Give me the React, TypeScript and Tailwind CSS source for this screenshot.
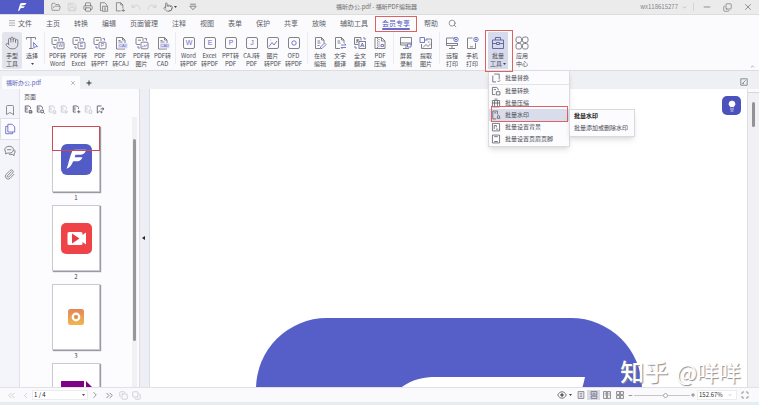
import { useState, type ReactNode } from "react";
import {
  Bookmark,
  ChevronDown,
  ChevronLeft,
  ChevronRight,
  ChevronsLeft,
  ChevronsRight,
  Copy,
  FolderOpen,
  Hand,
  Lightbulb,
  Maximize,
  Menu,
  Minus,
  Paperclip,
  Pointer,
  Printer,
  Redo,
  Save,
  Search,
  Undo,
  X,
} from "lucide-react";

interface Tool {
  lines: [string, string];
  icon: ReactNode;
  active?: boolean;
  caret?: boolean;
}

function Glyph({ children }: { children: ReactNode }) {
  return (
    <svg
      viewBox="0 0 14 14"
      className="size-3.5 shrink-0 text-[#74757c]"
      fill="none"
      stroke="currentColor"
      strokeWidth="0.9"
      aria-hidden="true"
    >
      {children}
    </svg>
  );
}

function Letter({ x, y, size, children }: { x: number; y: number; size: number; children: string }) {
  return (
    <text
      x={x}
      y={y}
      fontSize={size}
      textAnchor="middle"
      fill="#6a6dc0"
      stroke="none"
      fontFamily="Liberation Sans, sans-serif"
    >
      {children}
    </text>
  );
}

// PDF page turning into another format
function ExportGlyph({ letter }: { letter: string }) {
  return (
    <Glyph>
      <path d="M5 8.5H2a1 1 0 0 1-1-1v-5a1 1 0 0 1 1-1h5a1 1 0 0 1 1 1V5" />
      <path d="M3 4.2h3" />
      <path d="M9.5 2.6h2v2M3 10v2h2" stroke="#6a6dc0" />
      <rect x="6" y="6.2" width="7" height="6.6" rx="1" />
      {letter === "img" ? (
        <path d="m7 11.5 2-2 1.2 1 1.8-2" stroke="#6a6dc0" />
      ) : (
        <Letter x={9.5} y={11.4} size={5}>{letter}</Letter>
      )}
    </Glyph>
  );
}

function StampGlyph({ label }: { label: string }) {
  return (
    <Glyph>
      <path d="M11 13H2.5V1.500h6L11 4v3M8.500 1.500V4H11M4.500 4.500h2M4.500 6h4" />
      <rect x="4" y="7.300" width="9.500" height="5" fill="#dcdbf6" stroke="none" />
      <Letter x={8.8} y={11.4} size={4}>{label}</Letter>
    </Glyph>
  );
}

function ImportGlyph({ letter }: { letter: string }) {
  return (
    <Glyph>
      <rect x="1.5" y="1.5" width="11" height="11" rx="1.5" />
      {letter === "img" && (
        <path d="m3 10.5 3-4 2 2.5L11 5M4.5 4h.6" stroke="#6a6dc0" />
      )}
      {letter === "ofd" && <circle cx="7" cy="7" r="2.2" stroke="#6a6dc0" />}
      {letter.length === 1 && <Letter x={7} y={9.3} size={7}>{letter}</Letter>}
    </Glyph>
  );
}

function PageGlyph({ mark }: { mark: ReactNode }) {
  return (
    <Glyph>
      <path d="M7 12.5H2.5v-11h6L11 4v3M8.5 1.5V4H11M4.5 5h2.5M4.5 7h3" />
      <g stroke="#6a6dc0">{mark}</g>
    </Glyph>
  );
}

const screenPath = "M10 2H1.5v7.5h11V7M7 9.5v3M4 12.5h6M1.5 7.5h11";

const toolGroups: { id: string; className: string; tools: Tool[] }[] = [
  {
    id: "convert-to",
    className: "w-[21px]",
    tools: [
      { lines: ["PDF转", "Word"], icon: <ExportGlyph letter="W" /> },
      { lines: ["PDF转", "Excel"], icon: <ExportGlyph letter="E" /> },
      { lines: ["PDF", "转PPT"], icon: <ExportGlyph letter="P" /> },
      { lines: ["PDF", "转CAJ"], icon: <StampGlyph label="CAJ" /> },
      { lines: ["PDF转", "图片"], icon: <ExportGlyph letter="img" /> },
      { lines: ["PDF转", "CAD"], icon: <StampGlyph label="CAD" /> },
    ],
  },
  {
    id: "convert-from",
    className: "w-[21px]",
    tools: [
      { lines: ["Word", "转PDF"], icon: <ImportGlyph letter="W" /> },
      { lines: ["Excel", "转PDF"], icon: <ImportGlyph letter="E" /> },
      { lines: ["PPT转", "PDF"], icon: <ImportGlyph letter="P" /> },
      { lines: ["CAJ转", "PDF"], icon: <ImportGlyph letter="J" /> },
      { lines: ["图片", "转PDF"], icon: <ImportGlyph letter="img" /> },
      { lines: ["OFD", "转PDF"], icon: <ImportGlyph letter="ofd" /> },
    ],
  },
  {
    id: "online",
    className: "w-5",
    tools: [
      { lines: ["在线", "编辑"], icon: <PageGlyph mark={<path d="m7.5 11 4-4 1.5 1.5-4 4h-1.500zM4.500 9.500h2" />} /> },
      { lines: ["文字", "翻译"], icon: <PageGlyph mark={<path d="M8 9h5l-1.500-1.500M13 11.500H8L9.500 13" />} /> },
      {
        lines: ["全文", "翻译"],
        icon: (
          <Glyph>
            <path d="M5.500 8.500H1.500v-7h6.500v3M3 4h3.500M4.700 3v1c0 1.500-.8 2.500-1.900 3M3.600 4.500c.4 1 .9 1.600 1.900 2" />
            <rect x="6" y="5.500" width="6.500" height="7" />
            <path d="m7.600 11 1.700-4 1.700 4M8.200 9.800h2.200M10 2h2v2M2 10v2h2" stroke="#6a6dc0" />
          </Glyph>
        ),
      },
      {
        lines: ["PDF", "压缩"],
        icon: (
          <Glyph>
            <path d="M2 1.500h6.500L12 5v7.500H2zM8.500 1.500V5H12" />
            <path d="M4.500 2v10M6 3v8" strokeDasharray="1.200 1" />
            <path d="M8 8.500h2.500v2H8z" stroke="#6a6dc0" />
          </Glyph>
        ),
      },
    ],
  },
  {
    id: "capture",
    className: "w-5",
    tools: [
      {
        lines: ["屏幕", "录制"],
        icon: (
          <Glyph>
            <path d="M1.500 1.500h11v7.500h-11zM7 9v3.500M4 12.500h6M1.500 7h11" />
            <path d="M8.500 8h3.500v3H8.500z" stroke="#6a6dc0" fill="#fbfbfd" />
          </Glyph>
        ),
      },
      {
        lines: ["提取", "图片"],
        icon: (
          <Glyph>
            <path d="M7 3h5.500v9.500H2.500V8M4 11.500l3-3 2 2 3-3" />
            <path d="M1 1.500h4.500v5H1zM5.500 4h3M9 6h1.500" stroke="#6a6dc0" />
          </Glyph>
        ),
      },
    ],
  },
  {
    id: "print",
    className: "w-5",
    tools: [
      {
        lines: ["远程", "打印"],
        icon: (
          <Glyph>
            <path d={screenPath} />
            <circle cx="11" cy="3.500" r="2.200" stroke="#6a6dc0" />
            <path d="M10 3.500h2M11 2.500v2" stroke="#6a6dc0" />
          </Glyph>
        ),
      },
      {
        lines: ["手机", "打印"],
        icon: (
          <Glyph>
            <path d="M7.500 2H2.500v10.500h8V7M5 10.800h3" />
            <circle cx="11" cy="3.500" r="2.200" stroke="#6a6dc0" />
            <path d="M10 3.500h2M11 2.500v2" stroke="#6a6dc0" />
          </Glyph>
        ),
      },
    ],
  },
  {
    id: "batch",
    className: "w-5",
    tools: [
      {
        lines: ["批量", "工具"],
        active: true,
        caret: true,
        icon: (
          <Glyph>
            <path d="M1.500 4h11v8.500h-11zM4.500 4V1.500h5V4M1.500 7.500h11" stroke="#5a5f9c" />
            <path d="M5.500 6.500h3v2h-3z" stroke="#5a5f9c" fill="#d7daea" />
          </Glyph>
        ),
      },
    ],
  },
];

const menus = [
  "主页", "转换", "编辑", "页面管理", "注释", "视图", "表单",
  "保护", "共享", "放映", "辅助工具", "会员专享", "帮助",
];

const batchItems = [
  { label: "批量替换", mark: <path d="M7 12.500H2.500v-9M4.500 1.500h7V9M9 11l1.500 1.500L13 10" /> },
  { label: "批量转换", mark: <path d="M6 12H2V2h6l2 2v2M4 5h3M7.500 8h5v4.500h-5z" /> },
  { label: "批量压缩", mark: <path d="M2 3.500h10v9H2zM2 7h10M5 1.500h4M5 3.500v9M9 3.500v9" /> },
  { label: "批量水印", mark: <path d="M7 12.500H2.500v-11H9V6M4.500 4h2.500M8 11.500h5M9 11c0-2 0-3.500 1.500-3.500S12 9 12 11" /> },
  { label: "批量设置背景", mark: <path d="M2 2h10v10.500H2zM4.500 10V5M4.500 5h3M7.500 5v2.500M7 10h3" /> },
  { label: "批量设置页眉页脚", mark: <path d="M2 1.500h10v11H2zM4.500 3.700h5M4.500 10.500h5" /> },
];

function Brand({ className }: { className: string }) {
  return (
    <svg viewBox="0 0 30 30" className={className} fill="currentColor" aria-hidden="true">
      <path d="M11 6.500C12 5.500 13 5 15 5h11c-1.500 4-3.500 5.500-7 5.500h-4.500l-1 2.500H22c-1.500 3.500-3.500 4.500-6.500 4.500h-3.500C10.500 21 9 24 5 25.500 7 20 8.500 12 11 6.500z" />
    </svg>
  );
}

function Caret() {
  return (
    <svg viewBox="0 0 3 2" className="h-0.5 w-[3px] shrink-0" fill="#44454c" aria-hidden="true">
      <path d="M0 0h3L1.500 2z" />
    </svg>
  );
}

function ToolButton({ tool, className }: { tool: Tool; className: string }) {
  return (
    <button
      type="button"
      className={`flex h-[37px] shrink-0 flex-col items-center pt-1 text-center text-[6px] leading-2 whitespace-nowrap ${className} ${tool.active ? "bg-[#d7daea]" : ""}`}
    >
      {tool.icon}
      <span className="mt-0.5 block">{tool.lines[0]}</span>
      <span className="flex min-h-2 items-center gap-px">
        {tool.lines[1]}
        {tool.caret && <Caret />}
      </span>
    </button>
  );
}

function TitleBar() {
  return (
    <header className="flex h-[15px] shrink-0 items-center border-b border-[#dddde0] bg-[#ebebeb] text-[#6c6c70]">
      <div className="flex h-full flex-1 items-center gap-1.5">
        <div className="mr-px flex h-full w-11 shrink-0 items-center justify-center bg-[#535bc6] text-white">
          <Brand className="size-3" />
        </div>
        <button type="button" aria-label="打开"><FolderOpen size={10} strokeWidth={1.5} /></button>
        <button type="button" aria-label="保存" className="text-[#c6c6c9]"><Save size={10} strokeWidth={1.5} /></button>
        <button type="button" aria-label="打印"><Printer size={10} strokeWidth={1.7} /></button>
        <button type="button" aria-label="导出">
          <svg viewBox="0 0 14 14" className="size-2.5" fill="none" stroke="currentColor">
            <path d="M4 12H2V1h6l3 3v2M5 6h7v7H5zM7 8.500h3M7 11h3" />
          </svg>
        </button>
        <button type="button" aria-label="新建">
          <svg viewBox="0 0 14 14" className="size-2.5" fill="none" stroke="currentColor">
            <path d="M8 12.500H2V1h6l3 3v5M8 1v3h3M11.500 9.500V14M9 11.800h5" />
          </svg>
        </button>
        <button type="button" aria-label="撤销" className="text-[#c6c6c9]"><Undo size={10} strokeWidth={1.5} /></button>
        <button type="button" aria-label="重做" className="text-[#c6c6c9]"><Redo size={10} strokeWidth={1.5} /></button>
        <button type="button" aria-label="触摸模式" className="flex items-center gap-px">
          <Pointer size={10} strokeWidth={1.7} />
          <Caret />
        </button>
        <button type="button" aria-label="自定义工具栏" className="ml-1.5">
          <svg viewBox="0 0 10 10" className="size-2" fill="none" stroke="currentColor">
            <path d="M1.500 1.500h7M1 4h8L5 8.500z" />
          </svg>
        </button>
      </div>
      <h1 className="text-[6px] leading-2">福昕办公.pdf - 福昕PDF编辑器</h1>
      <div className="flex flex-1 items-center justify-end pr-1.5">
        <button type="button" className="flex items-center gap-1 text-[6px] leading-2 text-[#85858a]">
          wx118615277
          <ChevronDown size={5} />
        </button>
        <span className="mr-2 ml-1.5 h-2 w-px bg-[#d5d5d8]" />
        <div className="flex items-center gap-[11px]">
          <button type="button" aria-label="最小化"><Minus size={10} strokeWidth={1.7} /></button>
          <button type="button" aria-label="还原"><Copy size={9} strokeWidth={1.7} className="-scale-x-100 rotate-180" /></button>
          <button type="button" aria-label="关闭"><X size={10} strokeWidth={1.7} /></button>
        </div>
      </div>
    </header>
  );
}

function MenuBar() {
  return (
    <nav className="flex h-4 shrink-0 items-center bg-[#fbfbfd] pl-2 text-[7px] leading-2 text-[#606168]">
      <button type="button" className="mr-3.5 flex w-6 items-center gap-0.5 whitespace-nowrap">
        <Menu size={8} strokeWidth={1.5} />
        文件
      </button>
      <div className="flex items-center gap-3.5 whitespace-nowrap">
        {menus.map((label) =>
          label === "会员专享" ? (
            <button key={label} type="button" className="relative text-[#5156c0]">
              {label}
              <span className="absolute inset-x-0 -bottom-[3px] h-0.5 rounded bg-[#6a6cc9]" />
              <span className="absolute -inset-x-[7px] -top-[3px] -bottom-[5px] border border-[#dd6262]" />
            </button>
          ) : (
            <button key={label} type="button">{label}</button>
          ),
        )}
        <button type="button" aria-label="搜索" className="-ml-1"><Search size={9} strokeWidth={1.7} /></button>
      </div>
    </nav>
  );
}

function BatchMenu() {
  return (
    <div className="absolute top-[38px] left-0 z-20 w-[82px] border border-[#dcdce0] bg-[#fcfcfe] py-px text-[#4a4b52] shadow-md">
      {batchItems.map((item, index) => (
        <div key={item.label} className={index === 0 ? "border-b border-[#e4e4e8]" : ""}>
          <button
            type="button"
            className={`relative flex h-3 w-full items-center gap-1 pl-0.5 text-[6px] leading-2 whitespace-nowrap ${item.label === "批量水印" ? "bg-[#d9dcea]" : ""}`}
          >
            <svg viewBox="0 0 14 14" className="size-2.5" fill="none" stroke="currentColor" aria-hidden="true">
              {item.mark}
            </svg>
            {item.label}
            {item.label === "批量水印" && (
              <span className="absolute -top-[3px] left-0.5 h-4 w-[77px] border border-[#dd6262]" />
            )}
          </button>
        </div>
      ))}
      <div
        role="tooltip"
        className="absolute top-[38px] left-20 flex w-[66px] flex-col gap-1 border border-[#dadade] bg-[#fcfcfe] py-0.5 pl-1 text-[6px] leading-2 whitespace-nowrap shadow-md"
      >
        <strong className="text-[#222]">批量水印</strong>
        <span className="mb-0.5">批量添加或删除水印</span>
      </div>
    </div>
  );
}

function Ribbon() {
  return (
    <div className="flex h-10 shrink-0 items-start border-b border-[#dcdde1] bg-[#fbfbfd] pt-px pl-0.5 text-[#4a4b52]">
      <ToolButton
        className="w-5 rounded-xs bg-[#e4e5ec]"
        tool={{
          lines: ["手型", "工具"],
          icon: <Hand size={14} strokeWidth={1.3} className="text-[#65666d]" />,
        }}
      />
      <ToolButton
        className="w-5"
        tool={{
          lines: ["选择", ""],
          caret: true,
          icon: (
            <Glyph>
              <path d="M1.500 3.500v-2h9v2M6 1.500v11M4 12.500h4" />
              <path d="m8.500 6.500 4 4-2 .2-1.500 1.600z" stroke="#6a6dc0" />
            </Glyph>
          ),
        }}
      />
      {toolGroups.map((group) => (
        <div key={group.id} className="flex">
          <span className={`mr-0.5 h-8 w-px shrink-0 bg-[#ececf0] ${group.className === "w-5" ? "ml-[3px]" : "ml-0.5"}`} />
          {group.tools.map((tool) => (
            <div key={tool.lines.join("")} className="relative">
              <ToolButton tool={tool} className={group.className} />
              {tool.active && (
                <>
                  <span className="pointer-events-none absolute -top-0.5 -left-[3px] z-30 h-[42px] w-7 border border-[#dd6262]" />
                  <BatchMenu />
                </>
              )}
            </div>
          ))}
        </div>
      ))}
      <ToolButton
        className="ml-1 w-5"
        tool={{
          lines: ["应用", "中心"],
          icon: (
            <Glyph>
              <rect x="1" y="1" width="5.500" height="5.500" rx="1.800" />
              <rect x="7.500" y="1" width="5.500" height="5.500" rx="1.800" />
              <rect x="1" y="7.500" width="5.500" height="5.500" rx="1.800" />
              <rect x="7.500" y="7.500" width="5.500" height="5.500" rx="1.800" />
            </Glyph>
          ),
        }}
      />
      <button type="button" aria-label="折叠功能区" className="mr-1 mb-px ml-auto self-end">
        <ChevronDown size={5} className="rotate-180" />
      </button>
    </div>
  );
}

function TabStrip() {
  return (
    <div className="flex h-[18px] shrink-0 items-end bg-[#eef0f4] pl-0.5">
      <div className="flex h-[13px] w-[78px] items-center justify-between bg-[#fcfcfe] px-1 text-[6px] leading-2 text-[#5a5fc0]">
        <span>福昕办公.pdf</span>
        <button type="button" aria-label="关闭标签" className="text-[#777]"><X size={6} /></button>
      </div>
      <button type="button" aria-label="新标签" className="ml-1.5 h-3 text-[#333]">
        <svg viewBox="0 0 6 6" className="size-1.5" stroke="currentColor"><path d="M3 .5v5M.5 3h5" /></svg>
      </button>
      <button type="button" aria-label="编辑模式" className="mr-[11px] mb-[3px] ml-auto text-[#777]">
        <svg viewBox="0 0 10 10" className="size-2" fill="none" stroke="currentColor">
          <path d="M1 1h8v8H1zM3 7l4-4M3 7h2" />
        </svg>
      </button>
    </div>
  );
}

const pageTools = [
  { label: "放大页面", dim: false, mark: "M8 11h5M8 8.500h4v4H8z" },
  { label: "缩小页面", dim: false, mark: "M7.500 8h4v4h-4zM12 12l1.500 1.500" },
  { label: "左旋", dim: true, mark: "M8 9h4v4H8z" },
  { label: "右旋", dim: true, mark: "M8 8l4 2.500L8 13z" },
  { label: "插入", dim: false, mark: "M10.500 8v5M8 10.500h5" },
  { label: "删除", dim: true, mark: "M8 8h4v5H8z" },
];

function Thumbnail({ page, label, marked, children }: { page: number; label?: string; marked?: boolean; children: ReactNode }) {
  return (
    <li className="flex flex-col items-center">
      <button
        type="button"
        aria-label={`第${page}页`}
        className="relative flex h-[66px] w-12 shrink-0 items-center justify-center border border-[#c9c9cf] bg-white shadow-[1px_1px_1px_#9a9aa2]"
      >
        {children}
        {marked && <span className="absolute -inset-x-px -top-px h-[25px] border border-[#cf4a52]" />}
      </button>
      {label && <span className="h-[13px] pt-0.5 text-[6px] leading-2 text-[#444]">{label}</span>}
    </li>
  );
}

function PagesPanel() {
  return (
    <aside className="flex w-[120px] shrink-0 flex-col border-l border-[#e2e3ea] bg-[#fcfcfe]">
      <h2 className="mt-1 ml-1 text-[6px] leading-2 text-[#55565c]">页面</h2>
      <div className="mt-1 ml-1 flex h-3 items-start gap-[3px] text-[#5d5e66]">
        {pageTools.map((tool) => (
          <button key={tool.label} type="button" aria-label={tool.label} className={tool.dim ? "text-[#c8c8cf]" : ""}>
            <svg viewBox="0 0 14 14" className="size-[9px]" fill="none" stroke="currentColor" strokeWidth="1.400">
              <path d={`M6 11H2V1.500h6l2 2V6${tool.mark}`} />
              <path d="M4.500 3.500v5" />
            </svg>
          </button>
        ))}
        <button type="button" aria-label="页面书签">
          <svg viewBox="0 0 14 14" className="size-[9px]" fill="none" stroke="currentColor" strokeWidth="1.400">
            <path d="M8.500 1.500H2v11l3.500-3 3.500 3V9M7 6h5M10 4l2.500 2L10 8" />
          </svg>
        </button>
      </div>
      <div className="flex min-h-0 flex-1 overflow-hidden">
        <ol className="mt-[9px] ml-8 w-12">
          <Thumbnail page={1} label="1" marked>
            <span className="flex size-[31px] items-center justify-center rounded-md bg-[#535bc6] text-white">
              <Brand className="size-7" />
            </span>
          </Thumbnail>
          <Thumbnail page={2} label="2">
            <svg viewBox="0 0 31 31" className="size-[31px]" aria-hidden="true">
              <rect width="31" height="31" rx="5" fill="#ef4348" />
              <path d="M8 9h12a1.500 1.500 0 0 1 1.500 1.500V12L25 9.500v12L21.500 19v1.500A1.500 1.500 0 0 1 20 22H8a1.500 1.500 0 0 1-1.500-1.500v-10A1.500 1.500 0 0 1 8 9z" fill="#fff" />
              <path d="M11 10.500 18.500 15.500 11 20.500z" fill="#e93c42" />
            </svg>
          </Thumbnail>
          <Thumbnail page={3} label="3">
            <svg viewBox="0 0 16 16" className="size-4" aria-hidden="true">
              <defs>
                <linearGradient id="amber" x1="0" y1="0" x2="0" y2="1">
                  <stop offset="0" stopColor="#e58559" />
                  <stop offset="1" stopColor="#efb84c" />
                </linearGradient>
              </defs>
              <rect width="16" height="16" rx="2.500" fill="url(#amber)" />
              <circle cx="8" cy="8" r="3.300" fill="none" stroke="#fff" strokeWidth="2.200" />
              <circle cx="8" cy="8" r="1.200" fill="#d98a55" />
            </svg>
          </Thumbnail>
          <Thumbnail page={4}>
            <svg viewBox="0 0 31 31" className="size-[31px]" aria-hidden="true">
              <path d="M0 0h23v31H0zM25 0l6 6h-6z" fill="#7f0086" />
            </svg>
          </Thumbnail>
        </ol>
        <div className="mr-0.5 ml-auto flex w-[5px] justify-center bg-[#f1f1f4] pt-[22px]">
          <span className="h-[202px] w-[3px] rounded bg-[#98989c]" />
        </div>
      </div>
    </aside>
  );
}

function Workspace() {
  return (
    <div className="flex min-h-0 flex-1">
      <nav className="flex w-[19px] shrink-0 flex-col items-center bg-[#f4f5fa] pt-3 text-[#6d6e76]">
        <button type="button" aria-label="书签" className="h-[17px]"><Bookmark size={12} strokeWidth={1.5} /></button>
        <button type="button" aria-label="页面" className="flex h-[22px] w-full items-center justify-center border-y border-l border-[#dfe0ea] bg-[#fcfcfe] text-[#6366c4]">
          <svg viewBox="0 0 14 14" className="size-3" fill="none" stroke="currentColor" aria-hidden="true">
            <path d="M4.500 1.500h5l3 3v6h-8zM4.500 4H2v8.500h8v-2" />
          </svg>
        </button>
        <button type="button" aria-label="注释" className="flex h-[22px] items-center">
          <svg viewBox="0 0 14 14" className="size-3" fill="none" stroke="currentColor" aria-hidden="true">
            <path d="M6 1.500c3 0 5 1.600 5 4s-2 4-5 4c-.6 0-1.200 0-1.700-.2L2 10.500V8.300C1.300 7.600 1 6.600 1 5.500c0-2.400 2-4 5-4zM3.500 5.500h5" />
            <path d="M12.300 5.500c1 2 .6 3.800-.5 4.800v2l-2-1.200c-1.500.3-3 .1-4-.4" />
          </svg>
        </button>
        <button type="button" aria-label="附件" className="flex h-6 items-center"><Paperclip size={11} strokeWidth={1.700} /></button>
      </nav>
      <PagesPanel />
      <div className="flex w-[11px] shrink-0 items-center border-x border-[#dcdde2] bg-[#edeff4]">
        <button type="button" aria-label="收起面板">
          <svg viewBox="0 0 3 4" className="ml-0.5 h-1 w-[3px]" fill="#222"><path d="M3 0v4L0 2z" /></svg>
        </button>
      </div>
      <main className="relative flex min-w-0 flex-1 justify-center overflow-hidden bg-white">
        <svg viewBox="0 0 386 386" className="mt-[229px] size-[386px] shrink-0" aria-hidden="true">
          <rect width="386" height="386" rx="71" fill="#555fc7" />
          <path d="M143 71C155 62 165 59 181 59h148c-4 20-18 60-60 68h-90l-14 36h100c-16 42-34 55-70 55h-48c-20 40-40 88-86 100C92 240 110 96 143 71z" fill="#fff" />
        </svg>
        <button type="button" aria-label="提示" className="absolute top-[7px] right-[6px] flex size-[19px] items-center justify-center rounded-[5px] bg-[#4b52bd] text-white">
          <Lightbulb size={12} fill="currentColor" strokeWidth={1.500} />
        </button>
        <p className="absolute right-1.5 bottom-0 flex gap-2 text-[22px] leading-8 whitespace-nowrap text-white [text-shadow:1px_1px_1px_#8a8a8d]">
          <span className="text-2xl leading-8 font-medium">知乎</span>
          <span>@咩咩</span>
        </p>
      </main>
      <div className="flex w-3 shrink-0 flex-col items-center border-l border-[#dddde2] bg-[#f1f1f4]">
        <span className="h-1 w-full border-b border-[#d5d5da] bg-[#fafafa]" />
        <span className="mt-[9px] h-[25px] w-[3px] rounded bg-[#929297]" />
      </div>
    </div>
  );
}

const viewModes = [
  { label: "单页", path: "M2 1h10v12H2zM4.500 4h5M4.500 7h5M4.500 10h5" },
  { label: "连续", path: "M2 1h10v6H2zM2 9h10v4H2zM4.500 4h5" },
  { label: "双页", path: "M1 1h5.500v12H1zM7.500 1H13v12H7.500zM3 4h2M3 7h2M9.500 4h2M9.500 7h2" },
  { label: "双页连续", path: "M1 1h5.500v5H1zM7.500 1H13v5H7.500zM1 8h5.500v5H1zM7.500 8H13v5H7.500z" },
];

function StatusBar() {
  const [zoom, setZoom] = useState(57);

  return (
    <footer className="flex h-[15px] shrink-0 items-center border-t border-[#e2e2e6] bg-[#fafafc] pr-2.5 pl-1.5 text-[#5c5d64]">
      <button type="button" aria-label="首页" className="text-[#b9b9c0]"><ChevronsLeft size={11} strokeWidth={1.500} /></button>
      <button type="button" aria-label="上一页" className="ml-1 text-[#b9b9c0]"><ChevronLeft size={9} strokeWidth={1.500} /></button>
      <div className="ml-0.5 flex h-2.5 w-14 items-center border border-[#ececf0] bg-white pr-0.5">
        <input aria-label="页码" defaultValue="1 / 4" className="w-full min-w-0 bg-transparent pl-px text-[6px] leading-2 text-[#222] outline-none" />
        <Caret />
      </div>
      <button type="button" aria-label="下一页" className="ml-0.5"><ChevronRight size={10} strokeWidth={1.500} /></button>
      <button type="button" aria-label="末页" className="ml-1"><ChevronsRight size={11} strokeWidth={1.500} /></button>
      <div className="ml-1 flex gap-1 text-[#c0c0c6]">
        <button type="button" aria-label="上一视图"><Copy size={9} strokeWidth={1.700} /></button>
        <button type="button" aria-label="下一视图"><Copy size={9} strokeWidth={1.700} className="rotate-180" /></button>
      </div>
      <button type="button" aria-label="视图设置" className="ml-auto flex items-center gap-0.5">
        <svg viewBox="0 0 14 14" className="size-2.5" fill="none" stroke="currentColor" strokeWidth="1.200">
          <path d="M1 7c3-6 9-6 12 0-3 6-9 6-12 0z" />
          <circle cx="7" cy="7" r="1.800" fill="currentColor" />
        </svg>
        <Caret />
      </button>
      <div className="ml-0.5 flex">
        {viewModes.map((mode) => (
          <button
            key={mode.label}
            type="button"
            aria-label={mode.label}
            className={`flex h-2.5 w-[13px] items-center justify-center ${mode.label === "连续" ? "bg-[#d9dbe8]" : ""}`}
          >
            <svg viewBox="0 0 14 14" className="size-2" fill="none" stroke="currentColor" strokeWidth="1.200">
              <path d={mode.path} />
            </svg>
          </button>
        ))}
      </div>
      <button type="button" aria-label="缩小" className="ml-0.5"><Minus size={5} strokeWidth={3} /></button>
      <input
        type="range"
        aria-label="缩放"
        value={zoom}
        onChange={(event) => setZoom(Number(event.target.value))}
        className="mx-px h-px w-14 appearance-none bg-[#c4c4ca] [&::-webkit-slider-thumb]:size-[5px] [&::-webkit-slider-thumb]:appearance-none [&::-webkit-slider-thumb]:rounded-full [&::-webkit-slider-thumb]:border [&::-webkit-slider-thumb]:border-[#aaaab0] [&::-webkit-slider-thumb]:bg-white"
      />
      <button type="button" aria-label="放大">
        <svg viewBox="0 0 6 6" className="size-1" stroke="currentColor"><path d="M3 0v6M0 3h6" /></svg>
      </button>
      <div className="ml-0.5 flex h-2.5 w-10 items-center border border-[#ececf0] bg-white pr-1">
        <select aria-label="缩放比例" className="w-full appearance-none bg-transparent pl-px text-[6px] leading-2 text-[#333]">
          <option>152.67%</option>
        </select>
        <ChevronDown size={4} className="shrink-0" />
      </div>
      <button type="button" aria-label="全屏" className="ml-1"><Maximize size={8} strokeWidth={2} /></button>
    </footer>
  );
}

export default function App() {
  return (
    <div className="flex h-screen flex-col overflow-hidden bg-[#e4edf2] pb-[3px] font-['Noto_Sans_CJK_SC',sans-serif]">
      <TitleBar />
      <MenuBar />
      <Ribbon />
      <TabStrip />
      <Workspace />
      <StatusBar />
    </div>
  );
}
